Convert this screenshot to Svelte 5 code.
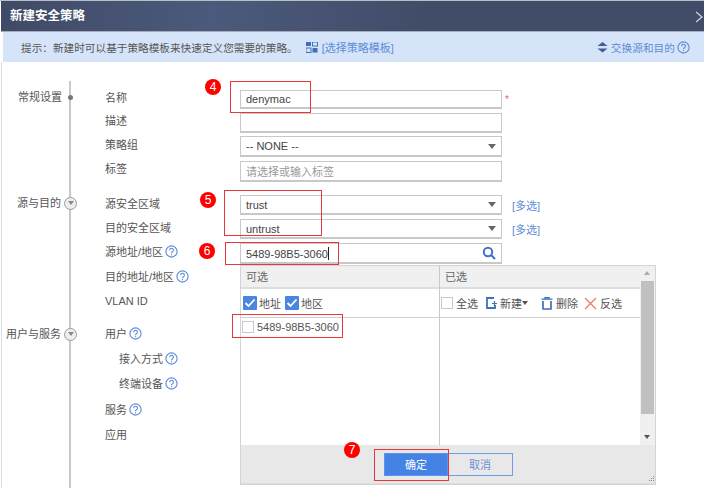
<script>
	const sections = [
		{ name: "常规设置", cls: "s1", dot: true },
		{ name: "源与目的", cls: "s2" },
		{ name: "用户与服务", cls: "s3" }
	];
	const annotations = [
		{ n: 4, bx: 230, by: 81, bw: 81, bh: 32, cx: 213, cy: 87 },
		{ n: 5, bx: 224, by: 190, bw: 98, bh: 46, cx: 208, cy: 200 },
		{ n: 6, bx: 225, by: 242, bw: 114, bh: 23, cx: 207, cy: 251 },
		{ n: 7, bx: 374, by: 449, bw: 75, bh: 32, cx: 352, cy: 450 }
	];
</script>

{#snippet help()}
	<svg class="help" width="13" height="13" viewBox="0 0 13 13">
		<circle cx="6.5" cy="6.5" r="5.6" fill="none" stroke="#5b8bd6" stroke-width="1.1" />
		<path d="M4.6 5.2a1.9 1.9 0 1 1 2.9 1.6c-.7.4-1 .7-1 1.5" fill="none" stroke="#5b8bd6" stroke-width="1.1" />
		<rect x="6" y="9.2" width="1.1" height="1.1" fill="#5b8bd6" />
	</svg>
{/snippet}

{#snippet caret()}
	<span class="caret"></span>
{/snippet}

{#snippet check()}
	<svg width="14" height="14" viewBox="0 0 14 14">
		<rect width="14" height="14" rx="1" fill="#4a86e0" />
		<path d="M2.5 7l3 3 6-6.5" fill="none" stroke="#fff" stroke-width="1.8" />
	</svg>
{/snippet}

<div class="dialog">
	<header class="title">
		<span>新建安全策略</span>
		<svg class="close" width="8" height="12" viewBox="0 0 8 12">
			<path d="M0 1l6 5-6 5" fill="none" stroke="#d5d8df" stroke-width="1.2" />
		</svg>
	</header>

	<div class="tips">
		<span class="hint">提示：新建时可以基于策略模板来快速定义您需要的策略。</span>
		<svg class="tpl" width="12" height="11" viewBox="0 0 12 11">
			<rect width="5" height="4" fill="#3f6fb8" />
			<rect x="6.5" width="5" height="4" fill="none" stroke="#3f6fb8" />
			<rect y="6" width="5" height="4.5" fill="none" stroke="#3f6fb8" />
			<rect x="6.5" y="6" width="5" height="4.5" fill="#3f6fb8" />
		</svg>
		<span class="link">[选择策略模板]</span>
		<span class="swap">
			<svg width="11" height="11" viewBox="0 0 11 11">
				<path d="M5.5 0L10.5 4H.5zM.5 6.5h10L5.5 10.5z" fill="#3d5f95" />
			</svg>
			<span class="link">交换源和目的</span>
			{@render help()}
		</span>
	</div>

	<div class="body">
		<div class="sections">
			{#each sections as s}
				<div class="section {s.cls}">
					<span>{s.name}</span>
					{#if s.dot}
						<span class="dot"></span>
					{:else}
						<span class="toggle"><span class="caret small"></span></span>
					{/if}
				</div>
			{/each}
		</div>

		<div class="labels">
			<div class="lb first">名称</div>
			<div class="lb">描述</div>
			<div class="lb">策略组</div>
			<div class="lb">标签</div>
			<div class="lb g11">源安全区域</div>
			<div class="lb">目的安全区域</div>
			<div class="lb">源地址/地区 {@render help()}</div>
			<div class="lb g1">目的地址/地区 {@render help()}</div>
			<div class="lb g1">VLAN ID</div>
			<div class="lb g8">用户 {@render help()}</div>
			<div class="lb sub g1">接入方式 {@render help()}</div>
			<div class="lb sub g1">终端设备 {@render help()}</div>
			<div class="lb g2">服务 {@render help()}</div>
			<div class="lb g1">应用</div>
		</div>

		<div class="controls">
			<div class="row name">
				<div class="input"><span class="val">denymac</span></div>
				<span class="req">*</span>
			</div>
			<div class="row desc"><div class="input"></div></div>
			<div class="row group"><div class="input select"><span class="val">-- NONE --</span>{@render caret()}</div></div>
			<div class="row tag"><div class="input tall"><span class="ph">请选择或输入标签</span></div></div>
			<div class="row src">
				<div class="input select"><span class="val">trust</span>{@render caret()}</div>
				<span class="link multi">[多选]</span>
			</div>
			<div class="row dst">
				<div class="input select"><span class="val">untrust</span>{@render caret()}</div>
				<span class="link multi">[多选]</span>
			</div>
			<div class="row addr">
				<div class="input select">
					<span class="val">5489-98B5-3060<i class="cursor"></i></span>
					<svg width="14" height="14" viewBox="0 0 14 14">
						<circle cx="6" cy="6" r="4.2" fill="none" stroke="#3f74c4" stroke-width="2" />
						<path d="M9 9l4 4" stroke="#3f74c4" stroke-width="2.2" />
					</svg>
				</div>
			</div>

			<div class="panel">
				<div class="cols">
					<div class="col left">
						<div class="head">可选</div>
						<div class="tools">
							<span class="tool">{@render check()} 地址</span>
							<span class="tool">{@render check()} 地区</span>
						</div>
						<div class="item"><span class="box"></span>5489-98B5-3060</div>
					</div>
					<div class="col right">
						<div class="head">已选</div>
						<div class="tools">
							<span class="tool"><span class="box"></span>全选</span>
							<span class="tool">
								<svg width="11" height="12" viewBox="0 0 11 12">
									<path d="M8 1H1v10h8V8" fill="none" stroke="#3f6fc0" stroke-width="1.8" />
									<path d="M6 6.5h5M8.5 4v5" stroke="#3f6fc0" stroke-width="1.2" />
								</svg>
								新建<span class="caret tiny"></span>
							</span>
							<span class="tool">
								<svg width="12" height="13" viewBox="0 0 12 13">
									<path d="M.5 2.2h11M4 2V.7h4V2" fill="none" stroke="#3f6fc0" stroke-width="1.3" />
									<path d="M2 4v8h8V4" fill="none" stroke="#3f6fc0" stroke-width="1.7" />
								</svg>
								删除
							</span>
							<span class="tool x">
								<svg width="13" height="13" viewBox="0 0 13 13">
									<path d="M1 1l11 11M12 1L1 12" stroke="#f0766c" stroke-width="1.3" />
								</svg>
								反选
							</span>
						</div>
					</div>
					<div class="scroll">
						<span class="arrow up"></span>
						<div class="thumb"></div>
						<span class="arrow down"></span>
					</div>
				</div>
				<div class="foot">
					<button class="ok">确定</button>
					<button class="cancel">取消</button>
					<svg class="grip" width="6" height="6" viewBox="0 0 6 6">
						<path d="M5 0h1v1H5zM3 2h1v1H3zM5 2h1v1H5zM1 4h1v1H1zM3 4h1v1H3zM5 4h1v1H5z" fill="#5b8bd6" />
					</svg>
				</div>
			</div>
		</div>

		<div class="rail"></div>
	</div>
</div>

<!-- red annotations drawn on top of the screenshot -->
{#each annotations as a}
	<div class="mark" style="left:{a.bx}px;top:{a.by}px;width:{a.bw}px;height:{a.bh}px"></div>
	<div class="num" style="left:{a.cx - 8}px;top:{a.cy - 8}px">{a.n}</div>
{/each}
<div class="mark" style="left:232px;top:314px;width:111px;height:24px"></div>

<style>
	:global(body) {
		margin: 0;
		background: #fff;
	}

	.dialog {
		width: 704px;
		height: 488px;
		box-sizing: border-box;
		overflow: hidden;
		font: 11px "Liberation Sans", "Noto Sans CJK SC", sans-serif;
		color: #555;
		padding-left: 1px;
		border-top: 1px solid #b9bdc6;
		display: flex;
		flex-direction: column;
	}

	.title {
		height: 30px;
		flex: none;
		background: linear-gradient(90deg, #3f4a66, #4b5a7c 30%, #414c68 60%);
		color: #fff;
		font-weight: bold;
		font-size: 12.5px;
		line-height: 31px;
		padding-left: 9px;
		position: relative;
		box-shadow: 0 1px 0 #aab;
	}

	.close {
		position: absolute;
		right: 0;
		top: 10px;
	}

	.tips {
		height: 30px;
		flex: none;
		margin: 1px 0 0 2px;
		background: #d5e4f9;
		display: flex;
		align-items: center;
		padding-left: 18px;
		box-sizing: border-box;
	}

	.hint {
		font-size: 10.65px;
	}

	.tpl {
		margin: 0 4px 0 8px;
	}

	.link {
		color: #5f8dd8;
	}

	.swap {
		margin-left: auto;
		margin-right: 14px;
		display: flex;
		align-items: center;
		gap: 3px;
	}

	.swap .link {
		font-size: 10.7px;
		margin-right: -1px;
	}

	.body {
		flex: 1;
		position: relative;
		display: flex;
		border-left: 1px solid #d6dce8;
	}

	.rail {
		position: absolute;
		left: 67px;
		top: 19px;
		bottom: 0;
		width: 2px;
		background: #c9c9c9;
	}

	.sections {
		width: 103px;
		flex: none;
		position: relative;
		z-index: 1;
	}

	.section {
		height: 16px;
		line-height: 16px;
		width: 75px;
		display: flex;
		justify-content: flex-end;
		align-items: center;
		gap: 3px;
		margin-top: 90px;
	}

	.section.s1 {
		margin-top: 27px;
	}

	.section.s3 {
		margin-top: 115px;
	}

	.dot {
		width: 5px;
		height: 5px;
		border-radius: 50%;
		background: #777;
		margin: 0 4px 0 3px;
	}

	.toggle {
		width: 11px;
		height: 11px;
		border: 1px solid #9a9a9a;
		border-radius: 50%;
		background: #eee;
		display: flex;
		align-items: center;
		justify-content: center;
	}

	.labels {
		width: 135px;
		flex: none;
		padding-top: 23px;
	}

	.lb {
		display: flex;
		align-items: center;
		gap: 2px;
		color: #555;
		height: 24px;
	}

	.lb.first {
		height: 23px;
	}

	.lb.sub {
		padding-left: 14px;
	}

	.g1 { margin-top: 1px; }
	.g2 { margin-top: 2px; }
	.g8 { margin-top: 8px; }
	.g11 { margin-top: 11px; }

	.controls {
		flex: 1;
		padding-top: 28px;
	}

	.row {
		display: flex;
		align-items: center;
		margin-bottom: 4px;
		height: 20px;
	}

	.row.name {
		height: 19px;
	}

	.row.desc {
		margin-bottom: 3px;
	}

	.row.group {
		height: 21px;
	}

	.row.tag {
		height: 21px;
		margin-bottom: 13px;
	}

	.row.addr {
		margin-bottom: 1px;
		height: 21px;
	}

	.input {
		width: 262px;
		height: 100%;
		flex: none;
		box-sizing: border-box;
		border: 1px solid #c8c8c8;
		border-bottom-width: 2px;
		background: #fff;
		display: flex;
		align-items: center;
		justify-content: space-between;
		padding: 0 5px;
	}

	.val {
		color: #444;
	}

	.ph {
		color: #999;
	}

	.cursor {
		display: inline-block;
		width: 1px;
		height: 13px;
		background: #222;
		vertical-align: -2px;
	}

	.req {
		color: #f0606a;
		margin-left: 3px;
		font-size: 10px;
	}

	.multi {
		margin-left: 10px;
	}

	.caret {
		width: 0;
		height: 0;
		border: 4px solid transparent;
		border-top: 5px solid #666;
		border-bottom: 0;
	}

	.caret.small {
		border-width: 3px;
		border-top-width: 4px;
		border-bottom-width: 0;
		border-top-color: #888;
	}

	.caret.tiny {
		border-width: 3px;
		border-top-width: 4px;
		border-bottom-width: 0;
		border-top-color: #555;
		margin: 0 5px 0 -3px;
	}

	.panel {
		width: 416px;
		height: 220px;
		box-sizing: border-box;
		border: 1px solid #d4d4d4;
		display: flex;
		flex-direction: column;
		position: relative;
	}

	.cols {
		flex: 1;
		display: flex;
		min-height: 0;
	}

	.col.left {
		width: 198px;
		border-right: 1px solid #c8c8c8;
	}

	.col.right {
		flex: 1;
	}

	.head {
		height: 21px;
		line-height: 22px;
		background: #f0f0f0;
		padding-left: 5px;
		border-bottom: 2px solid #ddd;
		color: #666;
	}

	.tools {
		height: 28px;
		display: flex;
		align-items: center;
		gap: 8px;
		padding-left: 1px;
		border-bottom: 1px solid #d0d0d0;
	}

	.tool {
		display: flex;
		align-items: center;
		gap: 3px;
	}

	.tool.x {
		margin-left: -2px;
	}

	.col.left .tools {
		gap: 4px;
		height: 27px;
		padding-left: 2px;
		padding-bottom: 1px;
	}

	.col.left .tool {
		gap: 2px;
	}

	.item {
		display: flex;
		align-items: center;
		gap: 3px;
		height: 18px;
		padding-left: 1px;
	}

	.box {
		width: 12px;
		height: 12px;
		box-sizing: border-box;
		border: 1px solid #c8c8d0;
		display: inline-block;
	}

	.scroll {
		width: 15px;
		flex: none;
		background: #f0f0f0;
		position: relative;
	}

	.thumb {
		position: absolute;
		left: 1px;
		right: 1px;
		top: 15px;
		height: 133px;
		background: #c0c0c0;
	}

	.arrow {
		position: absolute;
		left: 4px;
		width: 0;
		height: 0;
		border: 3.5px solid transparent;
	}

	.arrow.up {
		top: 5px;
		border-top: 0;
		border-bottom: 4px solid #aaa;
	}

	.arrow.down {
		bottom: 6px;
		border-bottom: 0;
		border-top: 4px solid #555;
	}

	.foot {
		height: 38px;
		flex: none;
		background: #e8e8e8;
		display: flex;
		align-items: center;
		padding-left: 143px;
		position: relative;
		border-bottom: 1px solid #ddd;
	}

	.foot button {
		height: 23px;
		font: inherit;
		padding: 0;
		box-sizing: border-box;
	}

	.ok {
		width: 64px;
		background: #4582e6;
		color: #fff;
		border: 1px solid #5f93e8;
	}

	.cancel {
		width: 65px;
		background: #e8e8e8;
		color: #6f90d8;
		border: 1px solid #6f9ee8;
		border-left: 0;
	}

	.grip {
		position: absolute;
		right: 1px;
		bottom: 1px;
	}

	.mark {
		position: absolute;
		box-sizing: border-box;
		border: 1px solid #e8373c;
		pointer-events: none;
	}

	.num {
		position: absolute;
		width: 16px;
		height: 16px;
		border-radius: 50%;
		background: #f00;
		color: #fff;
		font: 12px/16px "Liberation Sans", sans-serif;
		text-align: center;
	}
</style>
